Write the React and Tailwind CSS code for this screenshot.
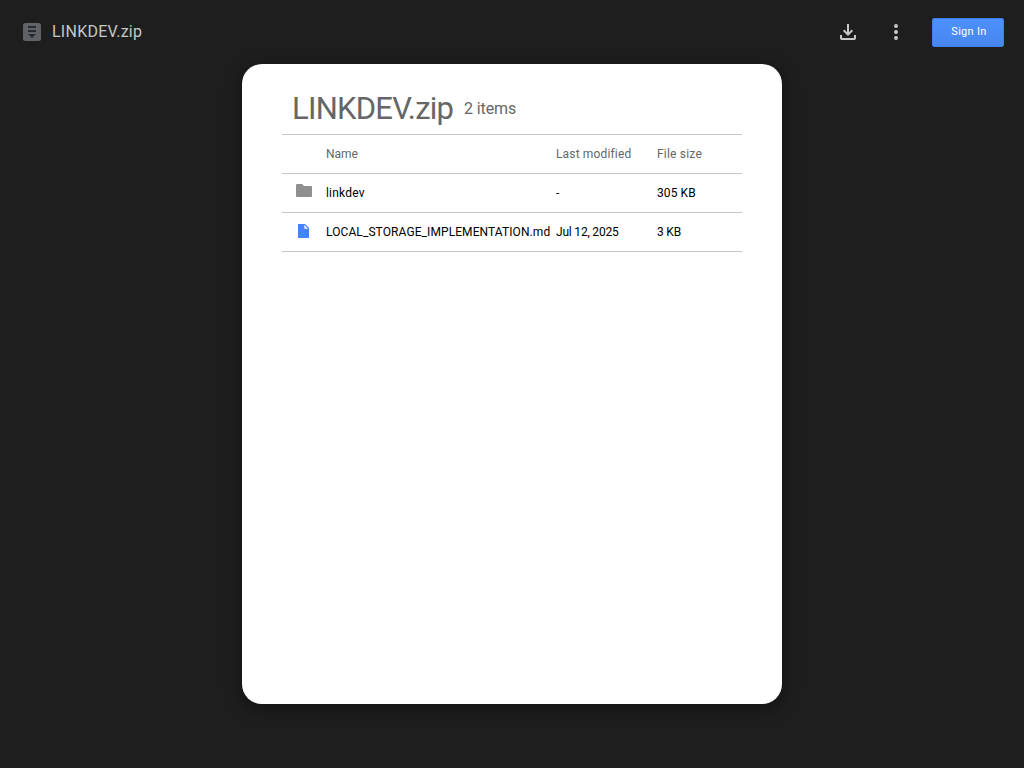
const cols = "grid grid-cols-[44px_230px_101px_85px] items-center h-[39px] border-b border-[#c7c7c7] leading-4 whitespace-nowrap";

function ArchiveIcon() {
  return (
    <svg className="w-[18px] h-[18px]" viewBox="0 0 18 18">
      <rect width="18" height="18" rx="2.5" fill="#5f6368" />
      <path d="M5 3h8v2H5zM5 7h8v2H5zM5 11h8l-4 4z" fill="#282b2f" />
    </svg>
  );
}

function DownloadIcon() {
  return (
    <svg className="w-6 h-6" viewBox="0 0 24 24" fill="#c7c7c7">
      <path d="M12 16l-5-5 1.4-1.45 2.6 2.6V4h2v8.15l2.6-2.6L17 11zM6 20q-.825 0-1.412-.587Q4 18.825 4 18v-3h2v3h12v-3h2v3q0 .825-.587 1.413Q18.825 20 18 20z" />
    </svg>
  );
}

function MoreIcon() {
  return (
    <svg className="w-6 h-6" viewBox="0 0 24 24" fill="#c7c7c7">
      <circle cx="12" cy="6" r="2" />
      <circle cx="12" cy="12" r="2" />
      <circle cx="12" cy="18" r="2" />
    </svg>
  );
}

function FolderIcon() {
  return (
    <svg className="w-4 h-[13px] ml-[14px] -translate-y-[3px]" viewBox="0 0 16 13">
      <path d="M1 0h5.2l1.7 2H15a1 1 0 0 1 1 1v9a1 1 0 0 1-1 1H1a1 1 0 0 1-1-1V1a1 1 0 0 1 1-1z" fill="#8f8f8f" />
    </svg>
  );
}

function FileIcon() {
  return (
    <svg className="w-[11px] h-[14px] ml-4 -translate-y-px" viewBox="0 0 11 14">
      <path d="M.5 0H7l4 4v9.5a.5.5 0 0 1-.5.5H.5a.5.5 0 0 1-.5-.5V.5A.5.5 0 0 1 .5 0z" fill="#4285f4" />
      <path d="M6.3 1v3.7H10z" fill="#fff" />
    </svg>
  );
}

export default function App() {
  return (
    <div className="flex h-screen flex-col bg-[#1e1e1e] font-['Roboto','Liberation_Sans',sans-serif]">
      <header className="flex h-16 shrink-0 items-center pl-[23px] pr-5">
        <ArchiveIcon />
        <span className="ml-[11px] text-[16px] leading-6 tracking-[0.25px] text-[#c7c7c7]">LINKDEV.zip</span>
        <div className="ml-auto flex items-center">
          <button className="mr-6" aria-label="Download"><DownloadIcon /></button>
          <button className="mr-6" aria-label="More actions"><MoreIcon /></button>
          <button className="h-[29px] w-[72px] rounded-[2px] border border-[#3e7fe8] bg-linear-to-b from-[#4d90fe] to-[#4787ed] pl-[2px] text-[11px] tracking-[0.3px] text-white">Sign In</button>
        </div>
      </header>
      <main className="mx-auto h-[640px] w-[540px] shrink-0 rounded-[20px] bg-white px-10 text-[12px] text-black shadow-[0_4px_15px_2px_rgba(0,0,0,0.35)]">
        <div className="flex h-[71px] items-center border-b border-[#c7c7c7] pl-[10px] pt-5 text-[#666]">
          <h1 className="w-[172px] text-[31px] leading-9 font-normal tracking-[-0.75px] whitespace-nowrap">LINKDEV.zip</h1>
          <span className="text-[16px] tracking-[-0.1px]">2 items</span>
        </div>
        <div className={cols + " text-[#666]"}>
          <span />
          <span>Name</span>
          <span className="tracking-[0.15px]">Last modified</span>
          <span className="tracking-[0.2px]">File size</span>
        </div>
        <div className={cols}>
          <FolderIcon />
          <span className="tracking-[0.2px]">linkdev</span>
          <span>-</span>
          <span className="tracking-[0.1px]">305 KB</span>
        </div>
        <div className={cols}>
          <FileIcon />
          <span className="tracking-[0.09px]">LOCAL_STORAGE_IMPLEMENTATION.md</span>
          <span className="tracking-[-0.2px]">Jul 12, 2025</span>
          <span className="tracking-[-0.2px]">3 KB</span>
        </div>
      </main>
    </div>
  );
}
